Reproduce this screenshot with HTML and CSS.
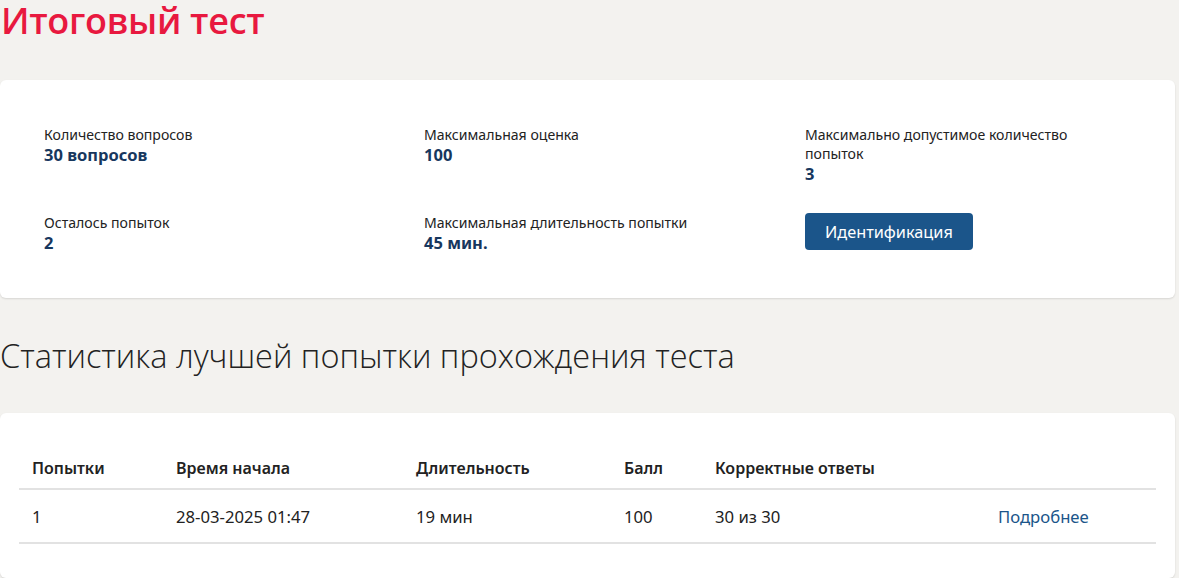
FILE: index.html
```html
<!DOCTYPE html>
<html lang="ru">
<head>
<meta charset="utf-8">
<title>Итоговый тест</title>
<link rel="stylesheet" href="styles.css">
</head>
<body>
<div class="page">
  <h1 class="title">Итоговый тест</h1>

  <section class="card info">
    <div class="info-grid">
      <div class="item">
        <div class="label">Количество вопросов</div>
        <div class="value">30 вопросов</div>
      </div>
      <div class="item">
        <div class="label">Максимальная оценка</div>
        <div class="value">100</div>
      </div>
      <div class="item">
        <div class="label">Максимально допустимое количество попыток</div>
        <div class="value">3</div>
      </div>
      <div class="item">
        <div class="label">Осталось попыток</div>
        <div class="value">2</div>
      </div>
      <div class="item">
        <div class="label">Максимальная длительность попытки</div>
        <div class="value">45 мин.</div>
      </div>
      <div class="item">
        <button class="btn" type="button">Идентификация</button>
      </div>
    </div>
  </section>

  <h2 class="subtitle">Статистика лучшей попытки прохождения теста</h2>

  <section class="card stats">
    <table class="table">
      <colgroup>
        <col class="c1"><col class="c2"><col class="c3"><col class="c4"><col class="c5"><col class="c6">
      </colgroup>
      <thead>
        <tr>
          <th>Попытки</th>
          <th>Время начала</th>
          <th>Длительность</th>
          <th>Балл</th>
          <th>Корректные ответы</th>
          <th></th>
        </tr>
      </thead>
      <tbody>
        <tr>
          <td>1</td>
          <td>28-03-2025 01:47</td>
          <td>19 мин</td>
          <td>100</td>
          <td>30 из 30</td>
          <td><a class="link" href="#">Подробнее</a></td>
        </tr>
      </tbody>
    </table>
  </section>
</div>
</body>
</html>
```

FILE: styles.css
```css
* { box-sizing: border-box; }
html, body { margin: 0; padding: 0; }
body {
  background: #f3f2ef;
  font-family: "Noto Sans", "Open Sans", sans-serif;
  color: #222;
}
.page {
  padding-right: 4px;
}
.title {
  margin: 0;
  height: 80px;
  padding: 0 0 0 1px;
  font-family: "Open Sans", sans-serif;
  font-weight: 600;
  font-size: 36px;
  line-height: 42px;
  color: #e8193f;
  letter-spacing: -0.3px;
}
.card {
  background: #fff;
  border-radius: 6px;
  box-shadow: 0 1px 2px rgba(0,0,0,0.12);
}
.info {
  height: 218px;
  padding: 45px 44px 0 44px;
}
.info-grid {
  display: grid;
  grid-template-columns: 380px 381px 1fr;
  row-gap: 22px;
}
.item { min-height: 66px; }
.label {
  font-size: 14.1px;
  line-height: 19px;
  color: #222;
  max-width: 290px;
}
.value {
  font-size: 16.5px;
  line-height: 22px;
  font-weight: 700;
  color: #17375e;
}
.btn {
  margin-top: 0;
  height: 37px;
  padding: 0 20px;
  border: none;
  border-radius: 4px;
  background: #1b558a;
  color: #fff;
  font-family: "Noto Sans", sans-serif;
  font-size: 16.3px;
}
.subtitle {
  margin: 0;
  height: 115px;
  padding-top: 37px;
  font-family: "Open Sans", sans-serif;
  font-weight: 300;
  font-size: 32.5px;
  line-height: 42px;
  color: #222;
  letter-spacing: 0;
}
.stats {
  padding: 34px 19px 34px 19px;
}
.table {
  width: 100%;
  border-collapse: collapse;
  table-layout: fixed;
  font-size: 16.7px;
}
.c1 { width: 144px; }
.c2 { width: 240px; }
.c3 { width: 208px; }
.c4 { width: 91px; }
.c5 { width: 283px; }
.c6 { width: auto; }
.table th {
  text-align: left;
  font-weight: 600;
  font-size: 16px;
  padding: 0 13px;
  height: 42px;
  border-bottom: 2px solid #e2e2e2;
  color: #222;
}
.table td {
  padding: 0 13px;
  height: 54px;
  border-bottom: 2px solid #e2e2e2;
  color: #222;
}
.link {
  color: #1b558a;
  text-decoration: none;
}
```
